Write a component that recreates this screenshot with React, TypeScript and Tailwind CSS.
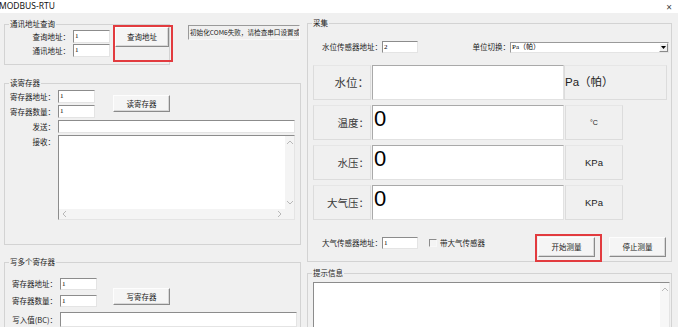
const UI = "font-['Noto_Sans_CJK_SC','Noto_Sans',sans-serif]";

function Field({ className = '', value = '' }: { className?: string; value?: string }) {
  return (
    <div className={`shrink-0 bg-white border border-t-[#8c8c8c] border-l-[#8c8c8c] border-r-[#e4e4e4] border-b-[#e4e4e4] pl-[1px] font-['Liberation_Serif',serif] text-[7px] leading-[10px] text-black ${className}`}>
      {value}
    </div>
  );
}

function Btn({ className = '', children }: { className?: string; children: React.ReactNode }) {
  return (
    <div className={`shrink-0 flex items-center justify-center bg-[#f5f5f5] border border-t-[#fdfdfd] border-l-[#fdfdfd] border-r-[#8a8a8a] border-b-[#8a8a8a] shadow-[inset_-1px_-1px_0_#d8d8d8] text-[7.5px] text-[#222] ${className}`}>
      {children}
    </div>
  );
}

function Group({ title, className = '', children }: { title: string; className?: string; children?: React.ReactNode }) {
  return (
    <fieldset className={`shrink-0 border border-[#d3d3d3] ${className}`}>
      <legend className="ml-[4px] px-[1px] text-[7.5px] leading-[8px] h-[8px] text-[#222]">{title}</legend>
      {children}
    </fieldset>
  );
}

function Label({ className = '', children }: { className?: string; children: React.ReactNode }) {
  return <div className={`shrink-0 text-right text-[7.5px] leading-[10px] text-[#222] ${className}`}>{children}</div>;
}

function Chevron({ dir }: { dir: 'up' | 'down' | 'left' | 'right' }) {
  const d = {
    up: 'M1 5 L4 2 L7 5',
    down: 'M1 3 L4 6 L7 3',
    left: 'M5 1 L2 4 L5 7',
    right: 'M3 1 L6 4 L3 7',
  }[dir];
  return (
    <svg width="8" height="8" viewBox="0 0 8 8">
      <path d={d} fill="none" stroke="#b8b8b8" strokeWidth="1" />
    </svg>
  );
}

function Meter({ label, value, unit, wide = false, labelClass = 'text-[10.5px]' }: {
  label: string; value: string; unit: React.ReactNode; wide?: boolean; labelClass?: string;
}) {
  return (
    <div className="flex h-[35px]">
      <div className={`w-[58px] flex items-center justify-end pr-[1px] border border-[#dcdcdc] border-t-[#e6e6e6] text-[#3a3a3a] ${labelClass}`}>{label}</div>
      <div className="ml-[1px] w-[192px] bg-white border border-t-[#a9a9a9] border-l-[#a9a9a9] border-r-[#e2e2e2] border-b-[#e2e2e2] pl-[1px] pt-[2px] font-['Liberation_Sans',sans-serif] text-[22px] leading-none text-black">
        {value}
      </div>
      <div className={`${wide ? 'w-[103px] justify-start' : 'ml-[1px] w-[58px] justify-center'} flex items-center border border-[#dcdcdc] border-t-[#e6e6e6] font-['Liberation_Sans','Noto_Sans_CJK_SC',sans-serif] text-[#222]`}>
        {unit}
      </div>
    </div>
  );
}

export default function App() {
  return (
    <div className={`w-[678px] h-[327px] overflow-hidden bg-[#f0f0f0] flex flex-col ${UI}`}>
      {/* title bar */}
      <div className="h-[13px] shrink-0 bg-white flex items-center justify-between">
        <span className="-ml-[1px] font-['Noto_Sans',sans-serif] text-[8.5px] leading-none text-[#111]">MODBUS-RTU</span>
        <span className="mr-[6px] font-['Noto_Sans',sans-serif] text-[10px] leading-none text-[#444]">×</span>
      </div>

      <div className="flex flex-1 min-h-0">
        {/* left column */}
        <div className="w-[303px] shrink-0 flex flex-col">
          <div className="flex items-start">
            <Group title="通讯地址查询" className="ml-[4px] mt-[7px] w-[166px] h-[45px]">
              <div className="flex pt-[2px]">
                <div className="flex flex-col gap-[1px]">
                  <div className="flex items-center h-[13px]">
                    <Label className="w-[65px]">查询地址：</Label>
                    <Field className="ml-[3px] w-[37px] h-[13px]" value="1" />
                  </div>
                  <div className="flex items-center h-[13px]">
                    <Label className="w-[65px]">通讯地址：</Label>
                    <Field className="ml-[3px] w-[37px] h-[13px]" value="1" />
                  </div>
                </div>
                <div className="relative ml-[5px] -mt-[3px]">
                  <Btn className="w-[54px] h-[20px]">查询地址</Btn>
                  <div className="absolute -left-[2px] -top-[2px] -right-[4px] -bottom-[5px] border-2 border-[#e23b3f]" />
                </div>
              </div>
            </Group>
            <div className="ml-[18px] mt-[12px] w-[112px] h-[15px] overflow-hidden whitespace-nowrap border border-t-[#9a9a9a] border-l-[#9a9a9a] border-r-[#f8f8f8] border-b-[#f8f8f8] pl-[1px] text-[6.6px] leading-[13px] text-[#222]">
              初始化COM6失败，请检查串口设置或
            </div>
          </div>

          <Group title="读寄存器" className="ml-[4px] mt-[14px] w-[297px] h-[166px]">
            <div className="flex flex-col pt-[3px]">
              <div className="flex items-start">
                <div className="flex flex-col gap-[2px]">
                  <div className="flex items-center h-[13px]">
                    <Label className="w-[50px]">寄存器地址：</Label>
                    <Field className="ml-[3px] w-[37px] h-[13px]" value="1" />
                  </div>
                  <div className="flex items-center h-[13px]">
                    <Label className="w-[50px]">寄存器数量：</Label>
                    <Field className="ml-[3px] w-[37px] h-[13px]" value="1" />
                  </div>
                </div>
                <Btn className="ml-[18px] mt-[5px] w-[57px] h-[17px]">读寄存器</Btn>
              </div>
              <div className="flex items-center mt-[2px] h-[13px]">
                <Label className="w-[50px]">发送：</Label>
                <Field className="ml-[3px] w-[237px] h-[13px]" />
              </div>
              <div className="flex items-start mt-[2px]">
                <Label className="w-[50px] pt-[2px]">接收：</Label>
                <div className="ml-[3px] w-[237px] h-[85px] flex flex-col bg-white border border-t-[#8c8c8c] border-l-[#8c8c8c] border-r-[#e4e4e4] border-b-[#e4e4e4]">
                  <div className="flex flex-1">
                    <div className="flex-1" />
                    <div className="w-[9px] bg-[#f4f4f4] flex flex-col items-center justify-between py-[3px]">
                      <Chevron dir="up" />
                      <Chevron dir="down" />
                    </div>
                  </div>
                  <div className="h-[10px] flex">
                    <div className="flex-1 bg-[#f4f4f4] flex items-center justify-between px-[2px]">
                      <Chevron dir="left" />
                      <Chevron dir="right" />
                    </div>
                    <div className="w-[9px] bg-[#f4f4f4]" />
                  </div>
                </div>
              </div>
            </div>
          </Group>

          <Group title="写多个寄存器" className="ml-[4px] mt-[13px] w-[297px] h-[80px]">
            <div className="flex flex-col pt-[12px]">
              <div className="flex items-start">
                <div className="flex flex-col gap-[5px]">
                  <div className="flex items-center h-[12px]">
                    <Label className="w-[52px]">寄存器地址：</Label>
                    <Field className="ml-[3px] w-[37px] h-[12px]" value="1" />
                  </div>
                  <div className="flex items-center h-[12px]">
                    <Label className="w-[52px]">寄存器数量：</Label>
                    <Field className="ml-[3px] w-[37px] h-[12px]" value="1" />
                  </div>
                </div>
                <Btn className="ml-[16px] mt-[10px] w-[57px] h-[17px]">写寄存器</Btn>
              </div>
              <div className="flex items-center mt-[5px] h-[15px]">
                <Label className="w-[52px]">写入值(BC)：</Label>
                <Field className="ml-[3px] w-[237px] h-[15px]" />
              </div>
            </div>
          </Group>
        </div>

        {/* right column */}
        <div className="flex-1 flex flex-col">
          <Group title="采集" className="ml-[4px] mt-[6px] w-[365px] h-[243px]">
            <div className="flex items-center mt-[14px] pl-[8px] h-[12px]">
              <Label className="w-[66px] text-left">水位传感器地址：</Label>
              <Field className="w-[36px] h-[12px]" value="2" />
              <Label className="ml-[49px] w-[43px] text-left">单位切换：</Label>
              <div className="w-[159px] h-[11px] flex bg-white border border-t-[#9a9a9a] border-l-[#9a9a9a] border-r-[#e4e4e4] border-b-[#e4e4e4]">
                <div className="flex-1 pl-[1px] font-['Liberation_Serif','Noto_Sans_CJK_SC',serif] text-[7px] leading-[9px] text-black">Pa（帕）</div>
                <div className="w-[9px] flex items-center justify-center bg-[#f0f0f0] border border-t-white border-l-white border-r-[#8a8a8a] border-b-[#8a8a8a]">
                  <svg width="5" height="3" viewBox="0 0 5 3"><path d="M0 0 H5 L2.5 3 Z" fill="#000" /></svg>
                </div>
              </div>
            </div>

            <div className="flex flex-col gap-[5px] mt-[12px] ml-[5px]">
              <Meter label="水位：" value="" wide labelClass="text-[11.5px]" unit={<span className="text-[11.5px] leading-none">Pa（帕）</span>} />
              <Meter label="温度：" value="0" unit={<span className="text-[7px] leading-none">°C</span>} />
              <Meter label="水压：" value="0" unit={<span className="text-[9.5px] leading-none">KPa</span>} />
              <Meter label="大气压：" value="0" unit={<span className="text-[9.5px] leading-none">KPa</span>} />
            </div>

            <div className="flex items-start mt-[17px] pl-[8px]">
              <div className="flex items-center h-[12px]">
                <Label className="w-[66px] text-left">大气传感器地址：</Label>
                <Field className="w-[36px] h-[12px]" value="1" />
                <div className="ml-[11px] w-[8px] h-[8px] border border-t-[#8c8c8c] border-l-[#8c8c8c] border-r-[#f8f8f8] border-b-[#f8f8f8] bg-[#f4f4f4]" />
                <Label className="ml-[3px] text-left">带大气传感器</Label>
              </div>
              <div className="relative ml-auto">
                <Btn className="w-[57px] h-[20px]">开始测量</Btn>
                <div className="absolute -left-[3px] -top-[3px] -right-[7px] -bottom-[5px] border-2 border-[#e23b3f]" />
              </div>
              <Btn className="ml-[14px] mr-[5px] w-[57px] h-[20px]">停止测量</Btn>
            </div>
          </Group>

          <Group title="提示信息" className="ml-[4px] mt-[7px] w-[365px] h-[70px]">
            <div className="ml-[5px] mt-[5px] w-[357px] h-[60px] flex bg-white border border-t-[#8c8c8c] border-l-[#8c8c8c] border-r-[#e4e4e4] border-b-[#e4e4e4]">
              <div className="flex-1" />
              <div className="w-[9px] bg-[#f7f7f7] flex flex-col items-center pt-[3px]">
                <Chevron dir="up" />
              </div>
            </div>
          </Group>
        </div>
      </div>
    </div>
  );
}
